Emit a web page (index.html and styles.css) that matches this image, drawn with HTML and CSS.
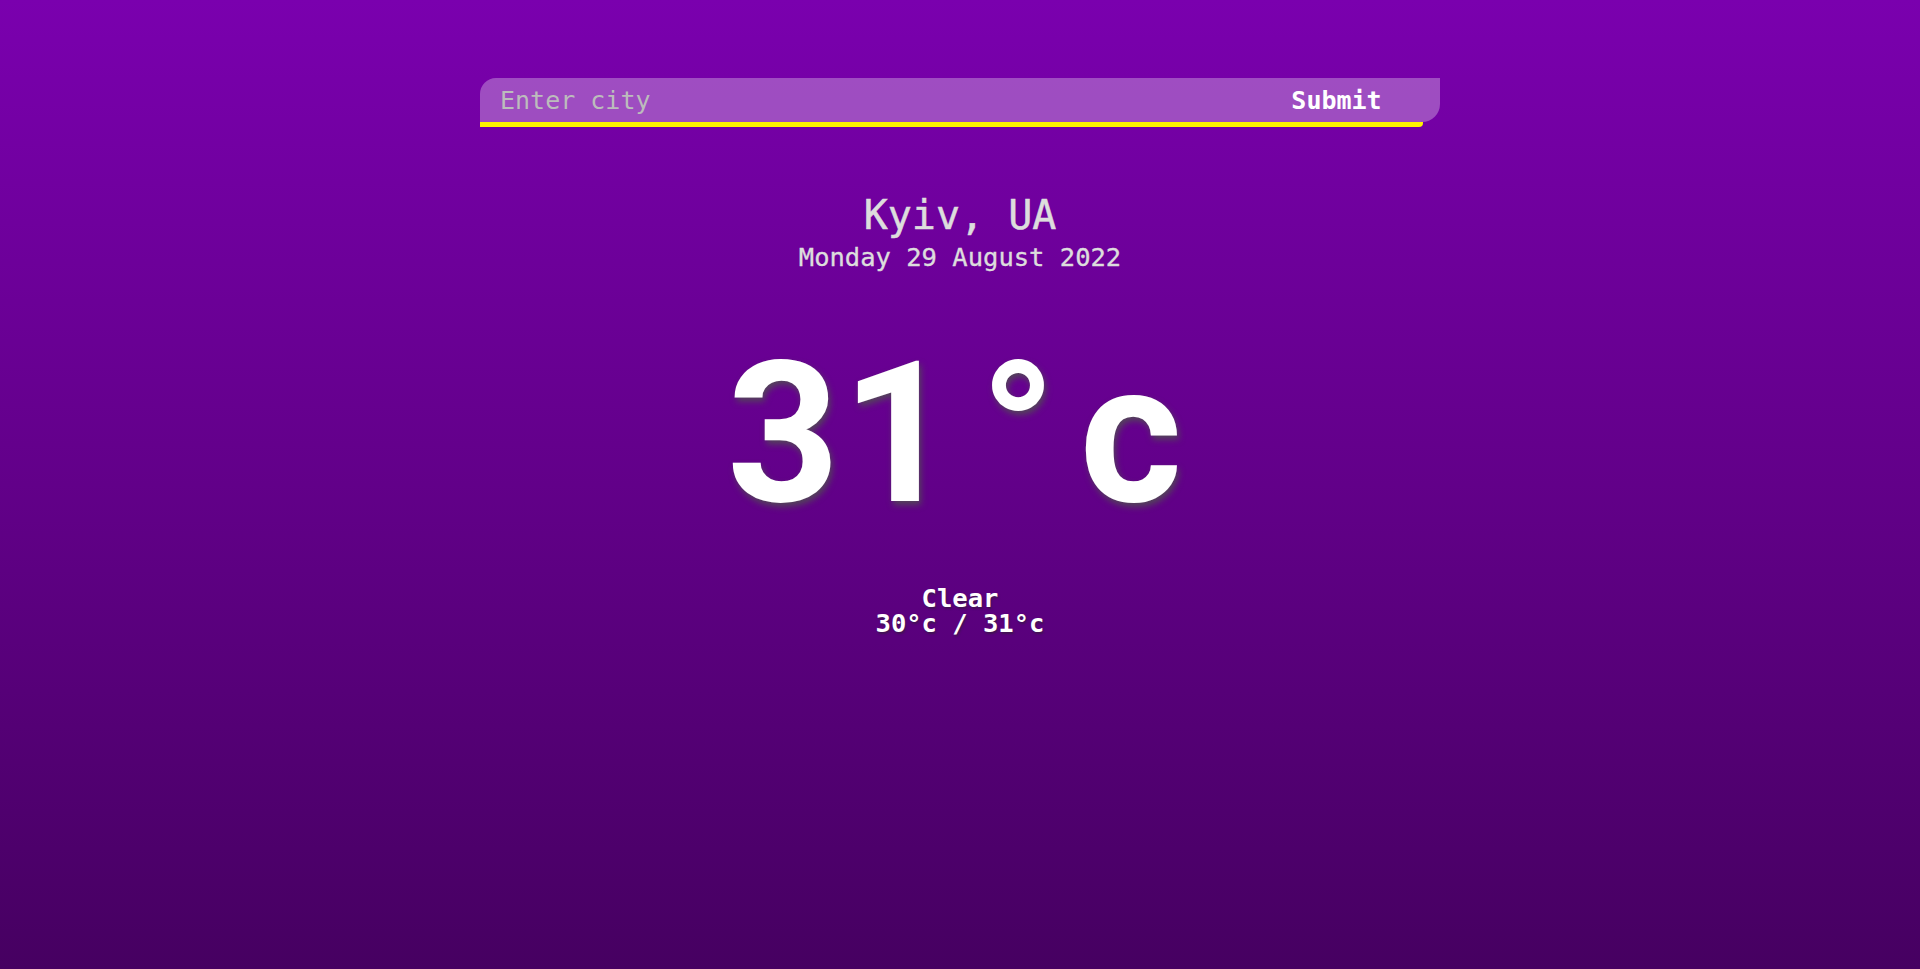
FILE: index.html
```html
<!DOCTYPE html>
<html lang="en">
<head>
<meta charset="utf-8">
<title>Weather</title>
<link rel="stylesheet" href="styles.css">
</head>
<body>
<div class="page">
  <form class="search">
    <input class="search-input" type="text" placeholder="Enter city">
    <button class="search-btn" type="button">Submit</button>
  </form>
  <section class="location">
    <div class="city">Kyiv, UA</div>
    <div class="date">Monday 29 August 2022</div>
  </section>
  <div class="temp">31<span class="unit">°c</span></div>
  <section class="conditions">
    <div class="weather">Clear</div>
    <div class="hi-low">30°c / 31°c</div>
  </section>
</div>
</body>
</html>
```

FILE: styles.css
```css
html, body {
  margin: 0;
  padding: 0;
}

.page {
  min-height: 100vh;
  display: flex;
  flex-direction: column;
  align-items: center;
  background: linear-gradient(180deg, #7a00ae 0%, #620089 50%, #460061 100%);
  font-family: "DejaVu Sans Mono", "Liberation Mono", monospace;
}

.search {
  position: relative;
  width: 960px;
  margin: 78px 0 0;
  display: flex;
  flex-direction: column;
}

.search::after {
  content: "";
  display: block;
  width: 943px;
  height: 5px;
  background: #fff200;
  border-radius: 0 0 4px 0;
}

.search-input {
  width: 100%;
  height: 44px;
  box-sizing: border-box;
  border: none;
  border-radius: 16px 0 18px 0;
  background: rgba(255, 255, 255, 0.3);
  padding: 0 20px;
  font-family: "DejaVu Sans Mono", monospace;
  font-size: 25px;
  color: #fff;
  outline: none;
}

.search-input::placeholder {
  color: #bcbcbc;
}

.search-btn {
  position: absolute;
  top: 0;
  right: 0;
  width: 207px;
  height: 44px;
  border: none;
  background: transparent;
  color: #fff;
  font-family: "DejaVu Sans Mono", monospace;
  font-size: 25px;
  font-weight: bold;
  padding: 0;
  cursor: pointer;
}

.location {
  margin-top: 68px;
  text-align: center;
  color: #dddddd;
}

.city {
  font-size: 40px;
  line-height: 1;
  -webkit-text-stroke: 0.5px #dddddd;
}

.date {
  margin-top: 10px;
  font-size: 25.5px;
  line-height: 1;
  -webkit-text-stroke: 0.35px #dddddd;
}

.temp {
  margin-top: 64.5px;
  font-family: Roboto, "Noto Sans", sans-serif;
  font-weight: 700;
  font-size: 197px;
  line-height: 1;
  letter-spacing: 2px;
  padding-left: 12px;
  color: #fff;
  text-shadow: 2px 4px 6px rgba(80, 80, 80, 0.85);
}

.unit {
  margin-left: 23px;
  letter-spacing: 23px;
}

.conditions {
  margin-top: 53.5px;
  text-align: center;
  color: #fff;
  font-size: 25.5px;
  line-height: 25px;
  font-weight: bold;
  text-shadow: 1px 2px 2px rgba(40, 40, 40, 0.5);
}
```
